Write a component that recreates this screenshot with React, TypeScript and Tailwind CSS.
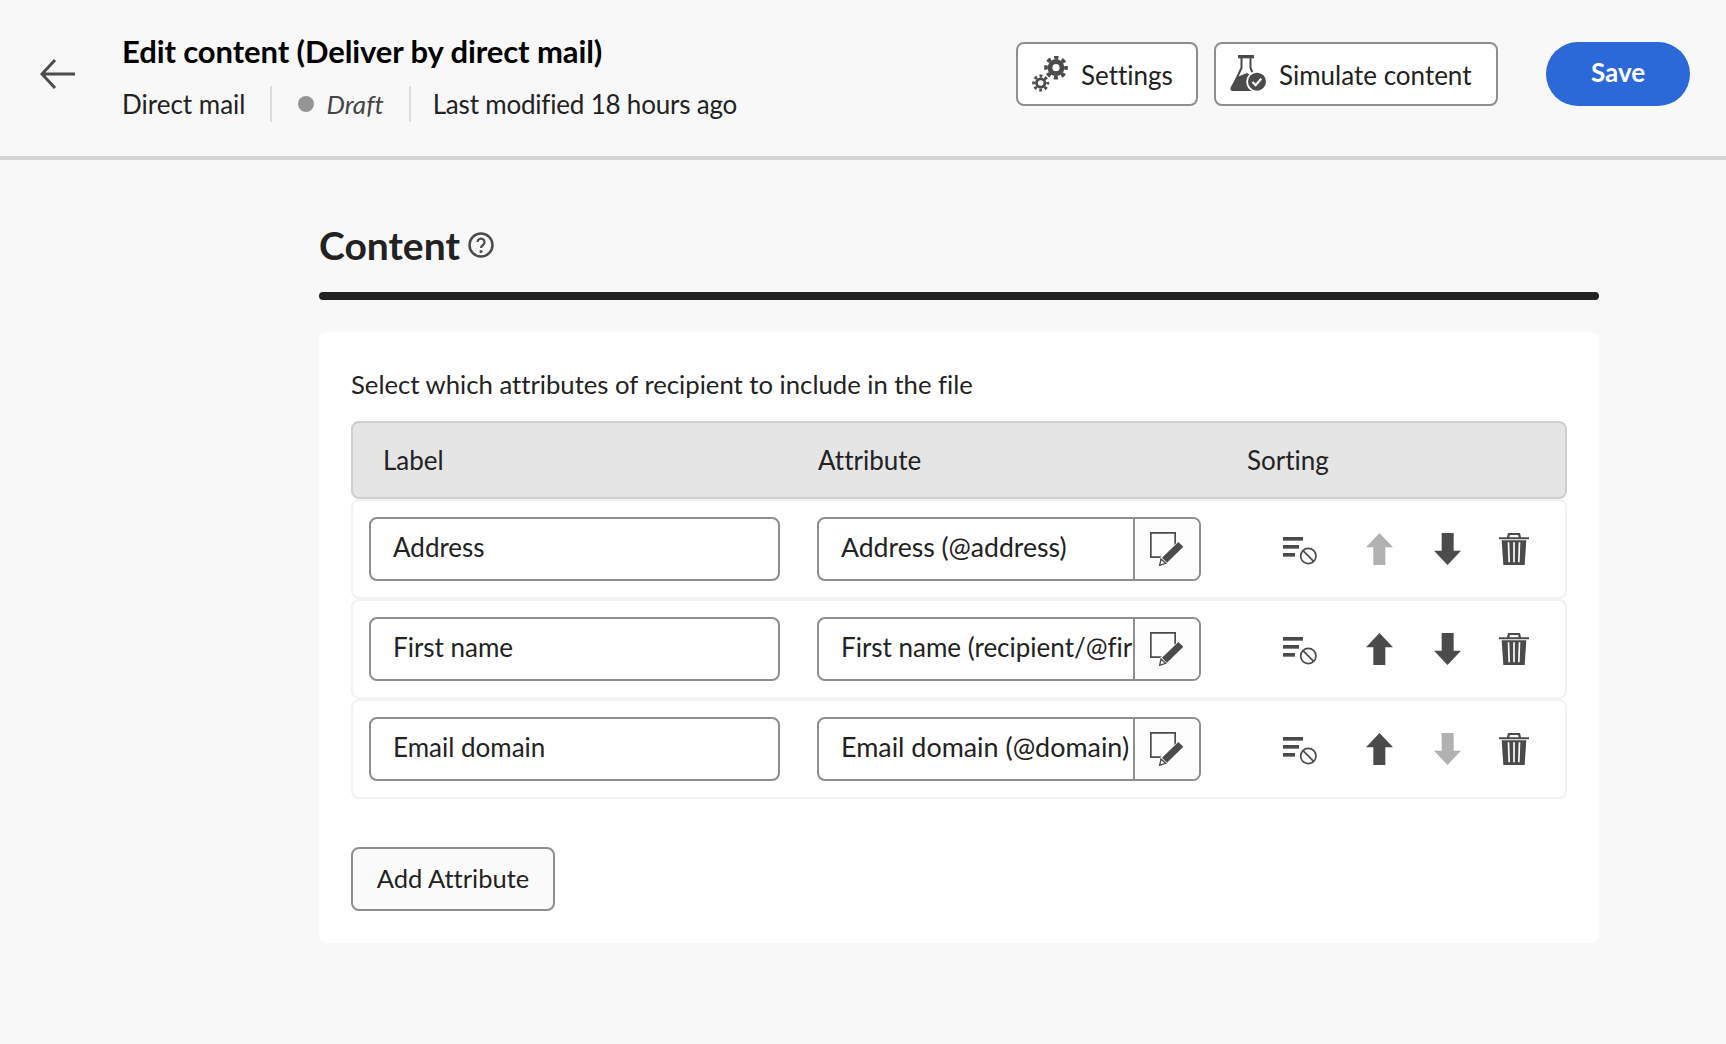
const font = "font-['Lato','Open_Sans',sans-serif]";

function ArrowIcon({ down = false, muted = false }: { down?: boolean; muted?: boolean }) {
	return (
		<svg width="27" height="32" viewBox="0 0 81 96" className={down ? "rotate-180" : ""}>
			<path d="M40.5 0 81 43H58v53H22V43H0z" fill={muted ? "#b1b1b1" : "#4b4b4b"} />
		</svg>
	);
}

function SortNoneIcon() {
	return (
		<svg width="34" height="28" viewBox="0 0 102 84" fill="#4b4b4b">
			<rect x="0" y="0" width="60" height="11" />
			<rect x="0" y="24" width="48" height="11" />
			<rect x="0" y="48" width="36" height="11" />
			<circle cx="76" cy="57" r="23" fill="none" stroke="#4b4b4b" strokeWidth="5" />
			<path d="M60 41 92 73" stroke="#4b4b4b" strokeWidth="5" />
		</svg>
	);
}

function TrashIcon() {
	return (
		<svg width="30" height="32" viewBox="0 0 90 96" fill="#4b4b4b">
			<path d="M0 13h24l3-13h36l3 13h24v6H0zM31 13h28l-1.500-7h-25z" fillRule="evenodd" />
			<path d="M8 22h74l-5 74H13z" />
			<path d="M26 28h5l2 60h-5zM42.500 28h5v60h-5zM59 28h5l-2 60h-5z" fill="#ffffff" />
		</svg>
	);
}

function EditIcon() {
	return (
		<svg width="34" height="34" viewBox="0 0 102 102" fill="#4b4b4b">
			<path d="M0 0h78v34l-5 5V5H5v68h30l-5 5H0z" />
			<path d="M85 30 100 44 51 92 36 77z" />
			<path d="M33 81 47 94 29 100z" fill="none" stroke="#4b4b4b" strokeWidth="4" />
		</svg>
	);
}

function GearsIcon() {
	return (
		<svg width="36" height="36" viewBox="0 0 36 36" fill="none" stroke="#4b4b4b">
			<circle cx="24" cy="11.700" r="6" strokeWidth="4.800" />
			<circle cx="24" cy="11.700" r="10" strokeWidth="3.600" strokeDasharray="4.200 3.654" strokeDashoffset="2.100" />
			<circle cx="8.700" cy="27" r="4.200" strokeWidth="2.800" />
			<circle cx="8.700" cy="27" r="7" strokeWidth="3" strokeDasharray="2.800 2.698" strokeDashoffset="1.400" />
		</svg>
	);
}

function FlaskIcon() {
	return (
		<svg width="36" height="38" viewBox="0 0 36 38">
			<rect x="8" y="0" width="16" height="3.300" fill="#4b4b4b" />
			<path d="M11.500 3v10L3 31M20.500 3v10l3 7" fill="none" stroke="#4b4b4b" strokeWidth="2" />
			<path d="M7 22l10-4 5 3 3 15H3c-2.500 0-3-2-2.200-4z" fill="#4b4b4b" />
			<circle cx="27" cy="26.700" r="10.700" fill="#ffffff" />
			<circle cx="27" cy="26.700" r="9" fill="#4b4b4b" />
			<path d="M22.500 27l3.200 3.200 5.500-6.500" fill="none" stroke="#ffffff" strokeWidth="2.200" />
		</svg>
	);
}

const rows = [
	{ label: "Address", attr: "Address (@address)", attrSize: "text-[26.6px]", upOff: true, downOff: false },
	{ label: "First name", attr: "First name (recipient/@firstName)", attrSize: "text-[26px]", upOff: false, downOff: false },
	{ label: "Email domain", attr: "Email domain (@domain)", attrSize: "text-[26.9px]", upOff: false, downOff: true },
];

export default function App() {
	return (
		<div className={`${font} min-h-[1044px] bg-[#f8f8f8] text-[#222222] [font-variant-ligatures:none]`}>
			<header className="h-[160px] border-b-4 border-[#d5d5d5] flex items-start pt-[33px] pl-[40px] pr-[36px]">
				<button className="w-[35px] h-[32px] mt-[25px] text-[#4b4b4b]">
					<svg width="35" height="32" viewBox="0 0 35 32" fill="none" stroke="currentColor" strokeWidth="3">
						<path d="M35 16H2M15 2 2 16l13 14" />
					</svg>
				</button>
				<div className="ml-[47px]">
					<h1 className="text-[31px] leading-[36px] font-bold text-black tracking-[-0.1px]">Edit content (Deliver by direct mail)</h1>
					<div className="flex items-center mt-[17px] text-[26px] leading-[34px]">
						<span>Direct mail</span>
						<span className="w-[2px] h-[36px] bg-[#dddddd] ml-[24px]" />
						<span className="w-[16px] h-[16px] rounded-full bg-[#959595] ml-[26px]" />
						<span className="italic text-[#444444] ml-[13px]">Draft</span>
						<span className="w-[2px] h-[36px] bg-[#dddddd] ml-[25px]" />
						<span className="ml-[22px] tracking-[-0.2px]">Last modified 18 hours ago</span>
					</div>
				</div>
				<button className="ml-auto mt-[9px] h-[64px] w-[182px] border-2 border-[#8e8e8e] rounded-[8px] bg-white flex items-center pl-[14px] gap-[13px] pt-[2px] text-[26px]">
					<span className="-mt-[2px]"><GearsIcon /></span>
					Settings
				</button>
				<button className="ml-[16px] mt-[9px] h-[64px] w-[284px] border-2 border-[#8e8e8e] rounded-[8px] bg-white flex items-center pl-[14px] gap-[13px] pt-[2px] text-[26px]">
					<span className="-mt-[2px]"><FlaskIcon /></span>
					Simulate content
				</button>
				<button className="ml-[48px] mt-[9px] h-[64px] w-[144px] rounded-full bg-[#2b68d8] text-white font-bold text-[26px] pb-[3px]">Save</button>
			</header>

			<main className="pl-[319px] pr-[127px]">
				<div className="flex items-center h-[132px] pt-[38px] gap-[8px]">
					<h2 className="text-[39px] leading-[52px] font-bold text-[#222222]">Content</h2>
					<svg width="26" height="26" viewBox="0 0 26 26">
						<circle cx="13" cy="13" r="11.500" fill="none" stroke="#4b4b4b" strokeWidth="2.500" />
						<path d="M9.500 10a3.500 3.500 0 1 1 5.500 3c-1.500 1-2 1.500-2 3" fill="none" stroke="#4b4b4b" strokeWidth="2.200" />
						<circle cx="13" cy="19.500" r="1.500" fill="#4b4b4b" />
					</svg>
				</div>
				<div className="h-[8px] rounded-full bg-[#222222]" />

				<section className="mt-[32px] bg-white rounded-[8px] p-[32px] h-[611px]">
					<p className="text-[25.7px] leading-[36px] mt-[2px]">Select which attributes of recipient to include in the file</p>
					<div className="mt-[19px] h-[78px] bg-[#e5e5e5] border-2 border-[#cfcfcf] rounded-[8px] flex items-center text-[26px]">
						<span className="ml-[30px] w-[435px]">Label</span>
						<span className="w-[429px]">Attribute</span>
						<span>Sorting</span>
					</div>
					<div className="flex flex-col">
						{rows.map((row) => (
							<div key={row.label} className="h-[100px] border-2 border-[#f2f2f2] rounded-[8px] flex items-center pl-[16px] text-[26px]">
								<div className="w-[411px] h-[64px] border-2 border-[#8e8e8e] rounded-[8px] flex items-center px-[22px] pb-[3px]">{row.label}</div>
								<div className="ml-[37px] w-[384px] h-[64px] border-2 border-[#8e8e8e] rounded-[8px] flex items-center overflow-hidden">
									<div className={`flex-1 min-w-0 pl-[22px] pb-[3px] whitespace-nowrap overflow-hidden ${row.attrSize}`}>{row.attr}</div>
									<div className="w-[66px] h-full shrink-0 border-l-2 border-[#8e8e8e] bg-[#fdfdfd] flex items-center justify-center">
										<EditIcon />
									</div>
								</div>
								<div className="ml-[82px] flex items-center">
									<div className="w-[34px] mt-[4px]"><SortNoneIcon /></div>
									<div className="ml-[49px]"><ArrowIcon muted={row.upOff} /></div>
									<div className="ml-[41px]"><ArrowIcon down muted={row.downOff} /></div>
									<div className="ml-[38px]"><TrashIcon /></div>
								</div>
							</div>
						))}
					</div>
					<button className="mt-[48px] h-[64px] w-[204px] border-2 border-[#8e8e8e] rounded-[8px] bg-[#fbfbfb] text-[25.5px] pb-[2px]">Add Attribute</button>
				</section>
			</main>
		</div>
	);
}
